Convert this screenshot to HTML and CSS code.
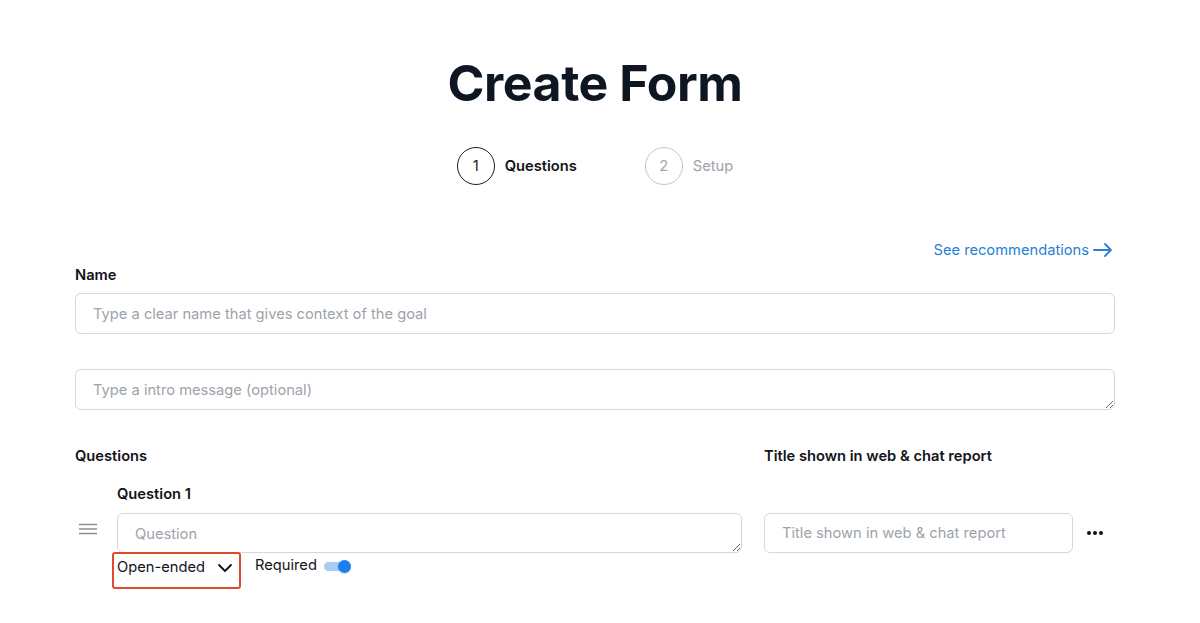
FILE: index.html
```html
<!DOCTYPE html>
<html lang="en">
<head>
<meta charset="utf-8">
<title>Create Form</title>
<link rel="stylesheet" href="styles.css">
</head>
<body>
<main class="page">
  <h1 class="title">Create Form</h1>
  <div class="steps">
    <div class="step step-active"><span class="step-num">1</span><span class="step-label">Questions</span></div>
    <div class="step step-idle"><span class="step-num">2</span><span class="step-label">Setup</span></div>
  </div>
  <div class="rec-row">
    <a class="rec-link" href="#">See recommendations
      <svg class="rec-arrow" width="20" height="14" viewBox="0 0 20 14" fill="none" stroke="currentColor" stroke-width="1.8" stroke-linecap="round" stroke-linejoin="round"><path d="M1 7h17M12 1l6 6-6 6"/></svg>
    </a>
  </div>
  <label class="label">Name</label>
  <input class="field name-field" type="text" placeholder="Type a clear name that gives context of the goal">
  <textarea class="field intro-field" rows="1" placeholder="Type a intro message (optional)"></textarea>

  <section class="qgrid">
    <div class="label qhead">Questions</div>
    <div class="label thead">Title shown in web &amp; chat report</div>
    <div class="label q1">Question 1</div>
    <div class="drag">
      <svg width="18" height="12" viewBox="0 0 18 12" fill="none" stroke="#8b9097" stroke-width="1.6"><path d="M0 1.5h18M0 6h18M0 10.5h18"/></svg>
    </div>
    <textarea class="field qfield" rows="1" placeholder="Question"></textarea>
    <input class="field tfield" type="text" placeholder="Title shown in web &amp; chat report">
    <div class="more">
      <svg width="16" height="4" viewBox="0 0 16 4" fill="#111"><circle cx="2" cy="2" r="2"/><circle cx="8" cy="2" r="2"/><circle cx="14" cy="2" r="2"/></svg>
    </div>
    <div class="controls">
      <div class="type-select">
        <span>Open-ended</span>
        <svg class="chev" width="16" height="10" viewBox="0 0 16 10" fill="none" stroke="#111" stroke-width="1.8" stroke-linecap="round" stroke-linejoin="round"><path d="M2 2l6 6 6-6"/></svg>
      </div>
      <span class="req">Required</span>
      <span class="toggle"><span class="knob"></span></span>
    </div>
  </section>
</main>
</body>
</html>
```

FILE: styles.css
```css
* { box-sizing: border-box; }
html, body { margin: 0; padding: 0; background: #fff; }
body {
  font-family: Inter, "Noto Sans", "Liberation Sans", sans-serif;
  color: #111418;
  font-size: 14.7px;
}
.page {
  width: 1040px;
  margin-left: 75px;
  padding-top: 53px;
}
.title {
  margin: 0;
  text-align: center;
  font-size: 50px;
  line-height: 60px;
  font-weight: 700;
  color: #0e1622;
  letter-spacing: -0.45px;
}
.steps {
  margin-top: 34px;
  display: flex;
  justify-content: center;
  gap: 68px;
  height: 38px;
}
.step { display: flex; align-items: center; gap: 10px; }
.step-num {
  width: 38px; height: 38px;
  border-radius: 50%;
  display: flex; align-items: center; justify-content: center;
  font-size: 14.7px;
}
.step-active .step-num { border: 1.5px solid #1a1d22; color: #1a1d22; }
.step-active .step-label { font-weight: 600; color: #111418; }
.step-idle .step-num { border: 1.5px solid #c3c5c8; color: #a3a6aa; }
.step-idle .step-label { color: #9ea1a6; }
.rec-row {
  margin-top: 55px;
  height: 20px;
  display: flex;
  justify-content: flex-end;
  padding-right: 2px;
}
.rec-link {
  color: #2a7fd5;
  text-decoration: none;
  line-height: 20px;
  display: flex;
  align-items: center;
  gap: 4px;
}
.label {
  display: block;
  font-weight: 600;
  line-height: 20px;
  color: #111418;
}
.page > .label { margin-top: 5px; }
.field {
  display: block;
  width: 100%;
  height: 41px;
  border: 1px solid #d5d7da;
  border-radius: 6px;
  padding: 0 17px;
  font-family: inherit;
  font-size: 14.7px;
  color: #111418;
  background: #fff;
  outline: none;
}
.field::placeholder { color: #9da3ab; }
textarea.field {
  padding-top: 10px;
  line-height: 20px;
  resize: vertical;
}
.name-field { margin-top: 8px; }
.intro-field { margin-top: 35px; }
.qgrid {
  margin-top: 36px;
  display: grid;
  grid-template-columns: 42px 625px 22px 309px 14px auto;
  align-items: center;
}
.qhead { grid-column: 1 / 3; grid-row: 1; }
.thead { grid-column: 4 / 7; grid-row: 1; }
.q1 { grid-column: 2; grid-row: 2; margin-top: 18px; }
.drag { grid-column: 1; grid-row: 3; margin-left: 4px; display: flex; }
.qfield { grid-column: 2; grid-row: 3; margin-top: 9px; height: 40px; }
.tfield { grid-column: 4; grid-row: 3; margin-top: 9px; height: 40px; }
.more { grid-column: 6; grid-row: 3; display: flex; padding-top: 9px; }
.controls {
  grid-column: 2 / 5;
  grid-row: 4;
  display: flex;
  align-items: flex-start;
  margin-top: -1px;
}
.type-select {
  margin-left: -5px;
  width: 129px;
  height: 37px;
  border: 2px solid #e04b2e;
  border-radius: 3px;
  padding: 3px 6px 0 3px;
  display: flex;
  align-items: flex-start;
  justify-content: space-between;
  line-height: 20px;
}
.chev { margin-top: 6px; }
.req { margin-left: 14px; line-height: 20px; margin-top: 3px; }
.toggle {
  position: relative;
  margin-left: 7px;
  margin-top: 10px;
  width: 26px;
  height: 9px;
  border-radius: 5px;
  background: #a7cdf6;
}
.knob {
  position: absolute;
  right: -1px;
  top: -2px;
  width: 13px;
  height: 13px;
  border-radius: 50%;
  background: #1a80f0;
  box-shadow: 0 1px 2px rgba(0,0,0,0.15);
}
```
